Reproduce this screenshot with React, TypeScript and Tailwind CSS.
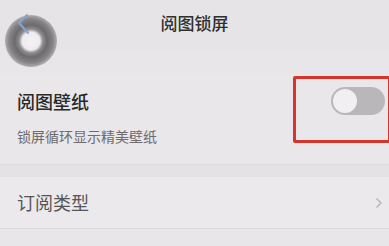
import React from "react";

function BackBubble() {
  return (
    <div className="absolute left-[5px] top-[15px] w-[52px] h-[52px] rounded-full bg-[radial-gradient(circle_closest-side,#f3f1f3_0%,#eeecee_34%,#8e8c8e_46%,#6c6a6c_62%,#858385_84%,#b0aeb0_100%)]">
      <svg className="absolute left-[12px] top-[-2px]" width="14" height="22" viewBox="0 0 14 22">
        <path d="M10 2 L2 10 L11 20" fill="none" stroke="#8aa3cc" strokeWidth="2" strokeLinecap="round" strokeLinejoin="round" />
      </svg>
    </div>
  );
}

export default function App() {
  return (
    <div className="relative w-[389px] h-[246px] overflow-hidden bg-[#e8e6e8] font-['Noto_Sans_CJK_SC',sans-serif]">
      <div className="h-[50px] flex items-center justify-center bg-[#e6e4e6]">
        <span className="text-[17px] font-medium text-[#2f2f2f] mt-[-4px]">阅图锁屏</span>
      </div>
      <BackBubble />

      <div className="bg-[#e9e7e9] border-b border-[#dcdadc]">
        <div className="h-[54px] mt-[24px] flex items-center justify-between pl-[17px] pr-[4px]">
          <span className="text-[18px] font-medium text-[#2a2a2a]">阅图壁纸</span>
          <div className="w-[54px] h-[28px] rounded-full bg-[#b9b7b9] p-[2px] flex items-center">
            <div className="w-[24px] h-[24px] rounded-full bg-[#f1eff1]" />
          </div>
        </div>
        <div className="pl-[17px] pb-[20px] text-[14px] leading-[16px] text-[#6e6c6e]">锁屏循环显示精美壁纸</div>
      </div>

      <div className="h-[12px] bg-[#e4e2e4]" />

      <div className="h-[52px] flex items-center justify-between pl-[17px] pr-[6px] bg-[#ebe9eb] border-b border-[#dcdadc]">
        <span className="text-[18px] text-[#555]">订阅类型</span>
        <svg width="8" height="12" viewBox="0 0 8 12">
          <path d="M1.5 1.5 L6 6 L1.5 10.5" fill="none" stroke="#b5b3b5" strokeWidth="1.4" />
        </svg>
      </div>

      <div className="absolute left-[293px] top-[76px] w-[98px] h-[67px] border-[3px] border-[#d7352c] rounded-[2px]" />
    </div>
  );
}
